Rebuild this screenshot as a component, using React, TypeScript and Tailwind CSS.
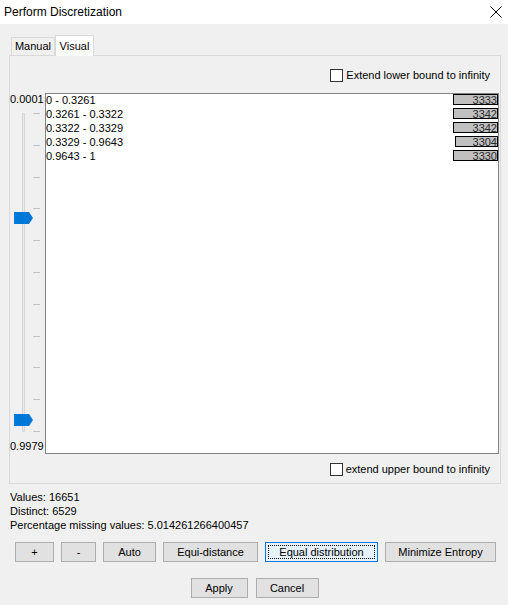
import React from "react";

const ROWS = [
  { range: "0 - 0.3261", count: 3333, w: 45 },
  { range: "0.3261 - 0.3322", count: 3342, w: 45 },
  { range: "0.3322 - 0.3329", count: 3342, w: 45 },
  { range: "0.3329 - 0.9643", count: 3304, w: 43 },
  { range: "0.9643 - 1", count: 3330, w: 45 },
];

const TICKS = [0, 1, 2, 3, 4, 5, 6, 7, 8, 9, 10];

function CheckBox({ label }: { label: string }) {
  return (
    <div className="flex items-center justify-end pr-[10px] h-[13px]">
      <span className="h-[13px] w-[13px] border border-[#333333] bg-white" />
      <span className="ml-[3px] leading-[13px]">{label}</span>
    </div>
  );
}

function Button({ label, w, focused }: { label: string; w: number; focused?: boolean }) {
  return (
    <button
      style={{ width: w }}
      className={
        focused
          ? "relative h-[20px] border border-[#0078d7] bg-[#e5f1fb] leading-[18px]"
          : "h-[20px] border border-[#adadad] bg-[#e1e1e1] leading-[18px]"
      }
    >
      {focused && <span className="absolute inset-[2px] border border-dotted border-black" />}
      {label}
    </button>
  );
}

function Thumb() {
  return (
    <svg width="19" height="12" viewBox="0 0 19 12">
      <polygon points="0,0 15,0 19,6 15,12 0,12" fill="#0078d7" />
    </svg>
  );
}

export default function App() {
  return (
    <div className="w-[508px] h-[605px] overflow-hidden bg-[#f0f0f0] font-['Liberation_Sans',Arial,sans-serif] text-[11px] text-black">
      {/* title bar */}
      <div className="flex h-[24px] items-center justify-between bg-white pb-[1px] pl-[4px] pr-[5px]">
        <span className="text-[12px]">Perform Discretization</span>
        <svg width="12" height="12" viewBox="0 0 12 12" className="mr-[1px]">
          <path d="M0.5 0.5L11.5 11.5M11.5 0.5L0.5 11.5" stroke="#000" strokeWidth="1" />
        </svg>
      </div>

      {/* tabs */}
      <div className="flex h-[31px] items-end pl-[11px]">
        <div className="flex h-[18px] w-[44px] items-center justify-center border border-b-0 border-[#d9d9d9] bg-[#f0f0f0]">
          Manual
        </div>
        <div className="relative z-10 -mb-px flex h-[21px] w-[39px] items-start justify-center border border-b-0 border-[#d9d9d9] bg-white pt-[2px]">
          Visual
        </div>
      </div>

      {/* tab page */}
      <div className="ml-[9px] flex h-[429px] w-[492px] flex-col border border-[#d9d9d9] bg-[#f0f0f0]">
        <div className="mt-[13px]">
          <CheckBox label="Extend lower bound to infinity" />
        </div>

        <div className="mt-[11px] flex h-[361px]">
          {/* slider column */}
          <div className="flex w-[35px] flex-col">
            <div className="h-[13px] leading-[13px]">0.0001</div>
            <div className="relative flex-1">
              <div className="absolute left-[12px] top-[7px] h-[319px] w-[3px] border border-[#d6d6d6] bg-[#e7eaea]" />
              {TICKS.map((i) => (
                <div
                  key={i}
                  className="absolute left-[23px] h-px w-[7px] bg-[#c4c4c4]"
                  style={{ top: 7 + Math.round(i * 31.8) }}
                />
              ))}
              <div className="absolute left-[4px] top-[106px]">
                <Thumb />
              </div>
              <div className="absolute left-[4px] top-[308px]">
                <Thumb />
              </div>
            </div>
            <div className="mb-[1px] h-[13px] leading-[13px]">0.9979</div>
          </div>

          {/* list box */}
          <div className="mr-[1px] flex-1 border border-[#828282] bg-white">
            {ROWS.map((r, i) => (
              <div key={i} className="flex h-[14px] items-start justify-between">
                <span className="leading-[13px]">{r.range}</span>
                <span
                  style={{ width: r.w }}
                  className="h-[11px] border border-black bg-[#c0c0c0] text-right leading-[10px] text-[#2a2a2a]"
                >
                  {r.count}
                </span>
              </div>
            ))}
          </div>
        </div>

        <div className="mt-[9px]">
          <CheckBox label="extend upper bound to infinity" />
        </div>
      </div>

      {/* stats */}
      <div className="ml-[10px] mt-[6px] leading-[14px]">
        <div>Values: 16651</div>
        <div>Distinct: 6529</div>
        <div>Percentage missing values: 5.014261266400457</div>
      </div>

      {/* buttons */}
      <div className="ml-[15px] mt-[10px] flex gap-[7px]">
        <Button label="+" w={39} />
        <Button label="-" w={35} />
        <Button label="Auto" w={53} />
        <Button label="Equi-distance" w={95} />
        <Button label="Equal distribution" w={113} focused />
        <Button label="Minimize Entropy" w={111} />
      </div>

      <div className="mt-[16px] flex justify-center gap-[8px] pl-[1px]">
        <Button label="Apply" w={57} />
        <Button label="Cancel" w={63} />
      </div>
    </div>
  );
}
